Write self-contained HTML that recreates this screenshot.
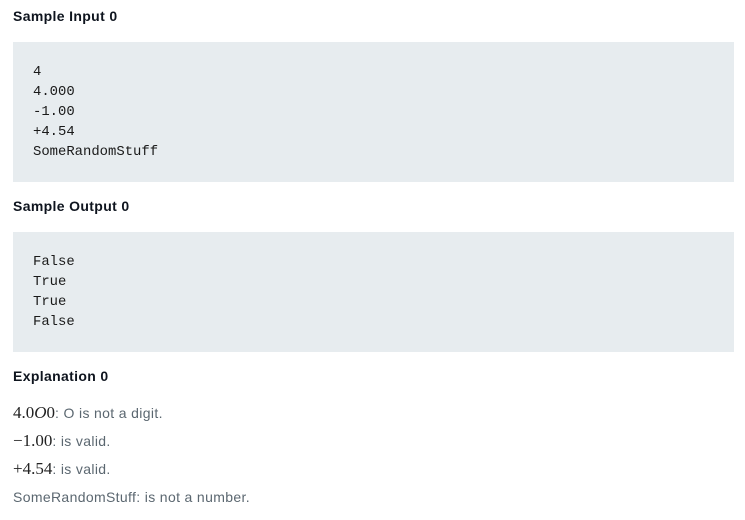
<!DOCTYPE html>
<html><head><style>
body{margin:0;background:#fff;font-family:"Liberation Sans","DejaVu Sans",sans-serif;}
.h{position:absolute;left:13px;font-weight:bold;font-size:14px;color:#0e141e;line-height:20px;letter-spacing:0.35px;}
.pre{position:absolute;left:13px;width:721px;background:#e7ecef;font-family:"Liberation Mono","DejaVu Sans Mono",monospace;font-size:13.9px;color:#1a1a1a;line-height:20px;box-sizing:border-box;padding:20px 20px;white-space:pre;}
.l{position:absolute;left:13px;font-size:14px;color:#5b6770;line-height:20px;letter-spacing:0.35px;}
.m{font-family:"Liberation Serif","DejaVu Serif",serif;font-size:17px;color:#222;letter-spacing:0;}
</style></head><body>
<div class="h" style="top:6px">Sample Input 0</div>
<div class="pre" style="top:42px;height:140px;padding-top:20px">4
4.000
-1.00
+4.54
SomeRandomStuff</div>
<div class="h" style="top:196px">Sample Output 0</div>
<div class="pre" style="top:232px;height:120px;padding-top:20px">False
True
True
False</div>
<div class="h" style="top:366px">Explanation 0</div>
<div class="l" style="top:403px"><span class="m">4.0<i>O</i>0</span>: O is not a digit.</div>
<div class="l" style="top:431px"><span class="m">−1.00</span>: is valid.</div>
<div class="l" style="top:459px"><span class="m">+4.54</span>: is valid.</div>
<div class="l" style="top:487px">SomeRandomStuff: is not a number.</div>
</body></html>
